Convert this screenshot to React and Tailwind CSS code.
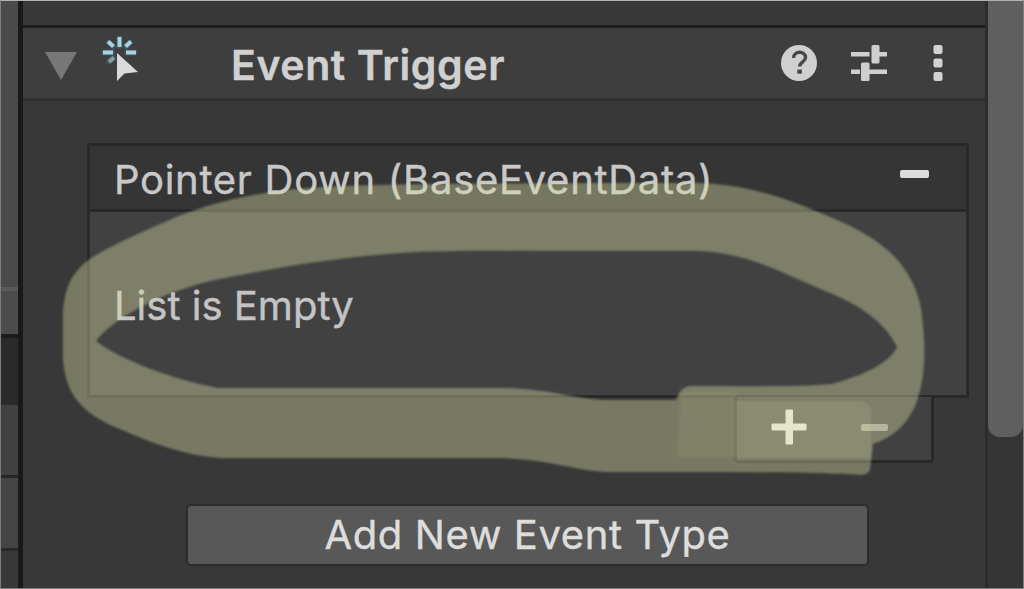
import React from 'react';

const EventTriggerIcon = () => (
  <svg width="40" height="50" viewBox="0 0 40 50" className="shrink-0">
    <g stroke="#3f6b80" strokeWidth="6" strokeLinecap="round" opacity="0.45">
      <path d="M19.5 4v8M4 18.500h8M27 18.500h8M9 8.500l4 4M30 8.500l-4 4M9 27.500l4-3.500" />
    </g>
    <g stroke="#a6d2e2" strokeWidth="4" strokeLinecap="butt">
      <path d="M19.500 3v10" />
      <path d="M3 18.500h10" />
      <path d="M26 18.500h10" />
      <path d="M8 7.500l5.500 5" />
      <path d="M31 7.500l-5.500 5" />
      <path d="M9 28l5-4.500" stroke="#8b9ba2" />
    </g>
    <path d="M17 19v28l7.500-7.500l13.500-1.500z" fill="#dadada" />
  </svg>
);

const HelpIcon = () => (
  <svg width="38" height="38" viewBox="0 0 38 38">
    <circle cx="19" cy="19" r="18" fill="#d0d0d0" />
    <path d="M13.500 14c.3-7.500 12-7.500 12-.5c0 4.500-5.800 4.200-5.800 9" fill="none" stroke="#484848" strokeWidth="3.400" />
    <rect x="17.300" y="25.500" width="4.600" height="4.200" fill="#484848" />
  </svg>
);

const PresetIcon = () => (
  <svg width="38" height="38" viewBox="0 0 38 38" fill="#cfcfcf">
    <rect x="1" y="8" width="18.500" height="4.500" />
    <rect x="21.500" y="1" width="8" height="18.500" rx="1.500" />
    <rect x="29" y="8" width="8" height="4.500" />
    <rect x="1" y="25.500" width="9" height="4.500" />
    <rect x="11" y="18.500" width="8.500" height="18.500" rx="1.500" />
    <rect x="19" y="25.500" width="18" height="4.500" />
  </svg>
);

const MenuIcon = () => (
  <svg width="10" height="38" viewBox="0 0 10 38" fill="#d2d2d2">
    <rect x="0.500" y="1" width="9" height="9" rx="2" />
    <rect x="0.500" y="14.500" width="9" height="9" rx="2" />
    <rect x="0.500" y="28" width="9" height="9" rx="2" />
  </svg>
);

// Edge of the neighbouring panel
const SidePanel = () => (
  <div className="flex w-[17px] shrink-0 flex-col bg-[#4a4a4a]">
    <div className="h-[286px]" />
    <div className="h-1 bg-[#5a5a5a]" />
    <div className="h-[43px] bg-[#4c4c4c]" />
    <div className="h-1 bg-[#1c1c1c]" />
    <div className="h-[67px] bg-[#2a2a2a]" />
    <div className="h-[70px] bg-[#414141]" />
    <div className="h-[3px] bg-[#262626]" />
    <div className="h-[70px] bg-[#444444]" />
    <div className="h-[3px] bg-[#2a2a2a]" />
    <div className="flex-1 bg-[#383838]" />
  </div>
);

// Hand drawn marker stroke around the empty list
const Highlight = () => (
  <svg
    className="pointer-events-none absolute -left-px -top-px blur-[1px]"
    width="1024"
    height="589"
    viewBox="0 0 1024 589"
  >
    <path
      fill="#dadba3"
      fillOpacity="0.4"
      fillRule="evenodd"
      d="M63 325C62 292 70 273 90 259C108 247 137 234 165 222C206 203 260 190 325 187C400 183 510 184 600 183H695C750 184 790 200 830 217C882 238 912 264 921 308C926 345 926 375 917 401C909 423 894 437 873 444L870 470Q868 475 860 475C820 472 720 472 605 472C570 469 545 459 500 458H220C180 455 145 440 110 425C76 408 66 390 63 360Z
         M96 341C102 333 110 326 125 316C155 297 192 284 225 278C280 267 340 257 400 253C450 250 500 251 560 251H700C750 254 780 272 825 291C867 307 887 327 897 347C890 363 864 375 832 384C800 387 740 386 690 386Q680 387 676 400H602C570 398 545 388 500 388H218C175 380 120 360 96 341Z"
    />
    <path
      fill="#dadba3"
      fillOpacity="0.08"
      d="M680 396Q680 392 690 392H736V457H676Q680 430 680 396Z"
    />
    <path fill="#dadba3" fillOpacity="0.14" d="M736 401H858Q871 402 871 412V458H736Z" />
  </svg>
);

const EventList = () => (
  <div className="ml-16 mr-4 mt-[42px]">
    <div className="h-[255px] border-[3px] border-[#292929] bg-[#414142]">
      <div className="flex h-[66px] items-center justify-between border-b-[3px] border-[#282828] bg-[#353536] pl-6 pr-[37px]">
        <span className="mt-1 whitespace-nowrap text-[40px] leading-none tracking-[0.7px] text-[#c8c8c8] [-webkit-text-stroke:0.4px_#c8c8c8]">
          Pointer Down (BaseEventData)
        </span>
        <span className="mb-2 h-2 w-[29px] rounded-[2px] bg-[#dcdcdc]" />
      </div>
      <div className="pl-6 pt-[74px] text-[40px] leading-none text-[#c4c4c4] [-webkit-text-stroke:0.4px_#c4c4c4]">
        List is Empty
      </div>
    </div>
    <div className="-mt-[1px] ml-auto mr-[35px] flex h-[66px] w-[200px] items-center rounded-b-[4px] border-x-[3px] border-b-[3px] border-[#272727] bg-[#414142] pb-[3px] pl-[34px]">
      <svg width="36" height="36" viewBox="0 0 36 36" fill="#f0f0f0">
        <rect x="0.500" y="14.500" width="35" height="7" rx="1" />
        <rect x="14.500" y="0.500" width="7.500" height="35" rx="1" />
      </svg>
      <span className="ml-[54px] h-[7px] w-[27px] rounded-[2px] bg-[#9b9b9b]" />
    </div>
  </div>
);

const App = () => {
  return (
    <div className="relative flex h-[589px] w-[1024px] overflow-hidden border border-[#7d7f7f] border-t-[#aeb4b4] bg-[#383838] font-['Inter','Liberation_Sans',sans-serif]">
      <SidePanel />
      <div className="w-[5px] shrink-0 bg-[#191919]" />

      <div className="flex min-w-0 flex-1 flex-col">
        <div className="h-6 shrink-0" />
        <div className="flex h-[76px] shrink-0 items-center border-b-[3px] border-t-[3px] border-b-[#303030] border-t-[#1e1e1e] bg-[#3e3e3e] pl-[22px] pr-[42px]">
          <svg width="32" height="28" viewBox="0 0 32 28" className="mt-[5px] shrink-0">
            <path d="M0 0h32L16 28z" fill="#777777" />
          </svg>
          <div className="-mt-2 ml-[23px]">
            <EventTriggerIcon />
          </div>
          <h1 className="ml-[91px] mt-1 whitespace-nowrap text-[41px] font-semibold leading-none tracking-[0.6px] text-[#d0d0d0] [-webkit-text-stroke:0.4px_#d0d0d0]">
            Event Trigger
          </h1>
          <div className="ml-auto flex items-center">
            <HelpIcon />
            <div className="ml-8">
              <PresetIcon />
            </div>
            <div className="ml-[45px]">
              <MenuIcon />
            </div>
          </div>
        </div>

        <EventList />

        <button className="ml-[163px] mt-[41px] h-[62px] w-[683px] shrink-0 rounded-[5px] border-2 border-[#2d2d2d] bg-[#585858] text-[40px] leading-none tracking-[0.6px] text-[#dddddd] [-webkit-text-stroke:0.4px_#dddddd]">
          Add New Event Type
        </button>
      </div>

      <div className="w-[38px] shrink-0 border-l-[3px] border-[#2d2d2d] bg-[#353535]">
        <div className="h-[436px] rounded-b-[12px] bg-[#5f5f5f]" />
      </div>

      <Highlight />
    </div>
  );
};

export default App;
